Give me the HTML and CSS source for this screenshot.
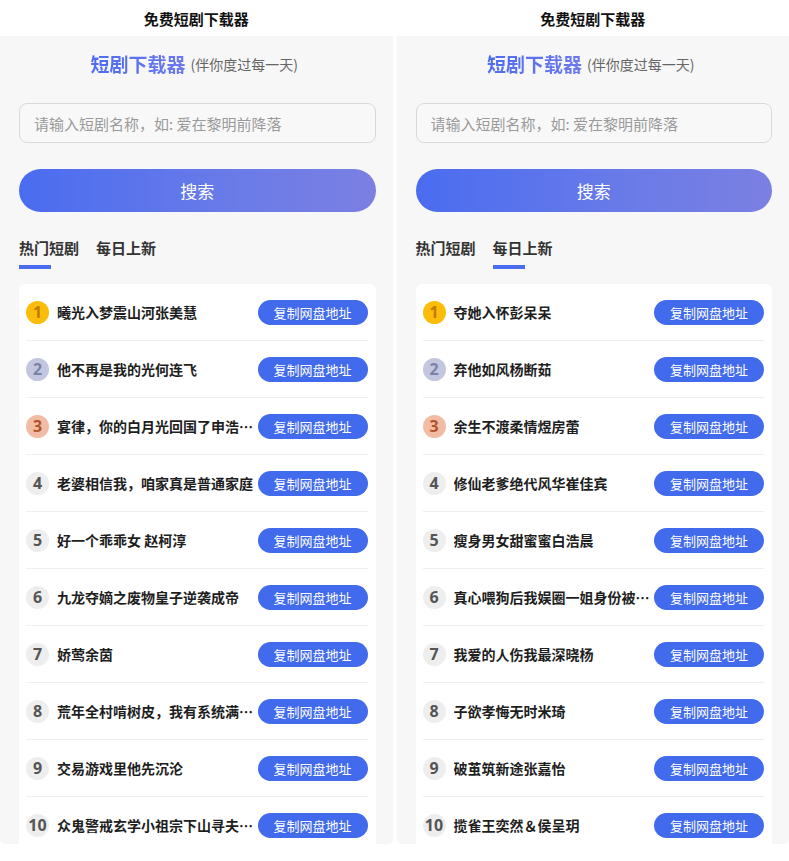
FILE: index.html
```html
<!DOCTYPE html>
<html lang="zh-CN">
<head>
<meta charset="utf-8">
<title>免费短剧下载器</title>
<link rel="stylesheet" href="styles.css">
</head>
<body>
<div class="stage">
  <section class="phone">
    <header class="bar">免费短剧下载器</header>
    <div class="screen">
      <h1 class="brand"><span class="brand-name">短剧下载器</span><span class="brand-sub">(伴你度过每一天)</span></h1>
      <input class="search-input" type="text" placeholder="请输入短剧名称，如: 爱在黎明前降落">
      <button class="search-btn">搜索</button>
      <nav class="tabs">
        <span class="tab active">热门短剧</span>
        <span class="tab">每日上新</span>
      </nav>
      <ul class="list">
        <li class="row"><span class="rank r1">1</span><span class="name">曦光入梦震山河张美慧</span><button class="copy">复制网盘地址</button></li>
        <li class="row"><span class="rank r2">2</span><span class="name">他不再是我的光何连飞</span><button class="copy">复制网盘地址</button></li>
        <li class="row"><span class="rank r3">3</span><span class="name">宴律，你的白月光回国了申浩宇然</span><button class="copy">复制网盘地址</button></li>
        <li class="row"><span class="rank">4</span><span class="name">老婆相信我，咱家真是普通家庭</span><button class="copy">复制网盘地址</button></li>
        <li class="row"><span class="rank">5</span><span class="name">好一个乖乖女 赵柯淳</span><button class="copy">复制网盘地址</button></li>
        <li class="row"><span class="rank">6</span><span class="name">九龙夺嫡之废物皇子逆袭成帝</span><button class="copy">复制网盘地址</button></li>
        <li class="row"><span class="rank">7</span><span class="name">娇莺余茵</span><button class="copy">复制网盘地址</button></li>
        <li class="row"><span class="rank">8</span><span class="name">荒年全村啃树皮，我有系统满仓粮</span><button class="copy">复制网盘地址</button></li>
        <li class="row"><span class="rank">9</span><span class="name">交易游戏里他先沉沦</span><button class="copy">复制网盘地址</button></li>
        <li class="row"><span class="rank">10</span><span class="name">众鬼警戒玄学小祖宗下山寻夫君了</span><button class="copy">复制网盘地址</button></li>
      </ul>
    </div>
  </section>
  <section class="phone">
    <header class="bar">免费短剧下载器</header>
    <div class="screen">
      <h1 class="brand"><span class="brand-name">短剧下载器</span><span class="brand-sub">(伴你度过每一天)</span></h1>
      <input class="search-input" type="text" placeholder="请输入短剧名称，如: 爱在黎明前降落">
      <button class="search-btn">搜索</button>
      <nav class="tabs">
        <span class="tab">热门短剧</span>
        <span class="tab active">每日上新</span>
      </nav>
      <ul class="list">
        <li class="row"><span class="rank r1">1</span><span class="name">夺她入怀彭呆呆</span><button class="copy">复制网盘地址</button></li>
        <li class="row"><span class="rank r2">2</span><span class="name">弃他如风杨断茹</span><button class="copy">复制网盘地址</button></li>
        <li class="row"><span class="rank r3">3</span><span class="name">余生不渡柔情煜房蕾</span><button class="copy">复制网盘地址</button></li>
        <li class="row"><span class="rank">4</span><span class="name">修仙老爹绝代风华崔佳宾</span><button class="copy">复制网盘地址</button></li>
        <li class="row"><span class="rank">5</span><span class="name">瘦身男女甜蜜蜜白浩晨</span><button class="copy">复制网盘地址</button></li>
        <li class="row"><span class="rank">6</span><span class="name">真心喂狗后我娱圈一姐身份被曝光</span><button class="copy">复制网盘地址</button></li>
        <li class="row"><span class="rank">7</span><span class="name">我爱的人伤我最深晓杨</span><button class="copy">复制网盘地址</button></li>
        <li class="row"><span class="rank">8</span><span class="name">子欲孝悔无时米琦</span><button class="copy">复制网盘地址</button></li>
        <li class="row"><span class="rank">9</span><span class="name">破茧筑新途张嘉怡</span><button class="copy">复制网盘地址</button></li>
        <li class="row"><span class="rank">10</span><span class="name">揽雀王奕然＆侯呈玥</span><button class="copy">复制网盘地址</button></li>
      </ul>
    </div>
  </section>
</div>
</body>
</html>
```

FILE: styles.css
```css
* { box-sizing: border-box; }
html, body {
  margin: 0;
  padding: 0;
  background: #ffffff;
  font-family: "Noto Sans CJK SC", "Noto Sans", "Liberation Sans", sans-serif;
  color: #222;
}
.stage {
  display: flex;
  gap: 4px;
  width: 789px;
  height: 861px;
}
.phone {
  flex: 1;
  display: flex;
  flex-direction: column;
  min-width: 0;
}
.bar {
  height: 36px;
  flex-shrink: 0;
  display: flex;
  align-items: center;
  justify-content: center;
  font-size: 15px;
  font-weight: 700;
  color: #111;
  background: #fff;
}
.screen {
  height: 808px;
  flex-shrink: 0;
  overflow: hidden;
  background: #f7f7f7;
  border-radius: 0 0 5px 5px;
  padding: 13px 17px 0 19px;
  display: flex;
  flex-direction: column;
}
.screen > * { flex-shrink: 0; }
.brand {
  margin: 0;
  height: 28px;
  display: flex;
  align-items: center;
  justify-content: center;
  font-weight: 400;
  padding-right: 6px;
}
.brand-name {
  font-size: 19px;
  font-weight: 700;
  background: linear-gradient(90deg, #4e6cf1, #6d79ee);
  -webkit-background-clip: text;
  background-clip: text;
  color: transparent;
}
.brand-sub {
  font-size: 14px;
  color: #666;
  margin-left: 5px;
  margin-top: 2px;
}
.search-input {
  margin-top: 26px;
  height: 40px;
  width: 100%;
  border: 1px solid #d9d9d9;
  border-radius: 8px;
  background: #f8f8f8;
  padding: 0 14px;
  font-family: inherit;
  font-size: 15px;
  color: #333;
  outline: none;
}
.search-input::placeholder { color: #9a9a9a; }
.search-btn {
  margin-top: 26px;
  height: 43px;
  width: 100%;
  border: none;
  border-radius: 22px;
  background: linear-gradient(90deg, #4a6cf0 0%, #6a7be8 60%, #7b80e2 100%);
  color: #fff;
  font-family: inherit;
  font-size: 17px;
  padding: 0;
}
.tabs {
  margin-top: 25px;
  display: flex;
  gap: 17px;
}
.tab {
  font-size: 15px;
  font-weight: 700;
  color: #333;
  line-height: 22px;
  padding-bottom: 10px;
  position: relative;
}
.tab.active::after {
  content: "";
  position: absolute;
  left: 0;
  bottom: 0;
  width: 32px;
  height: 4px;
  background: #4a6cf0;
}
.list {
  list-style: none;
  margin: 15px 0 0 0;
  padding: 0 8px 0 7px;
  background: #fff;
  border-radius: 6px;
}
.row {
  height: 57px;
  display: flex;
  align-items: center;
  border-bottom: 1px solid #efefef;
}
.rank {
  width: 23px;
  height: 23px;
  flex-shrink: 0;
  border-radius: 50%;
  background: #eeeeee;
  color: #555;
  font-size: 16px;
  font-weight: 700;
  display: flex;
  align-items: center;
  justify-content: center;
  font-family: "Noto Sans", "Liberation Sans", sans-serif;
}
.rank.r1 { background: #fbbd0a; color: #c27a00; }
.rank.r2 { background: #c2c7df; color: #7b82a8; }
.rank.r3 { background: #f2bca4; color: #b0532c; }
.name {
  flex: 1;
  min-width: 0;
  margin-left: 8px;
  margin-right: 2px;
  font-size: 14px;
  font-weight: 700;
  color: #1e1e1e;
  white-space: nowrap;
  overflow: hidden;
  text-overflow: ellipsis;
}
.copy {
  flex-shrink: 0;
  width: 110px;
  height: 25px;
  border: none;
  border-radius: 13px;
  background: #416aed;
  color: #fff;
  font-family: inherit;
  font-size: 13px;
  padding: 0;
}
```
